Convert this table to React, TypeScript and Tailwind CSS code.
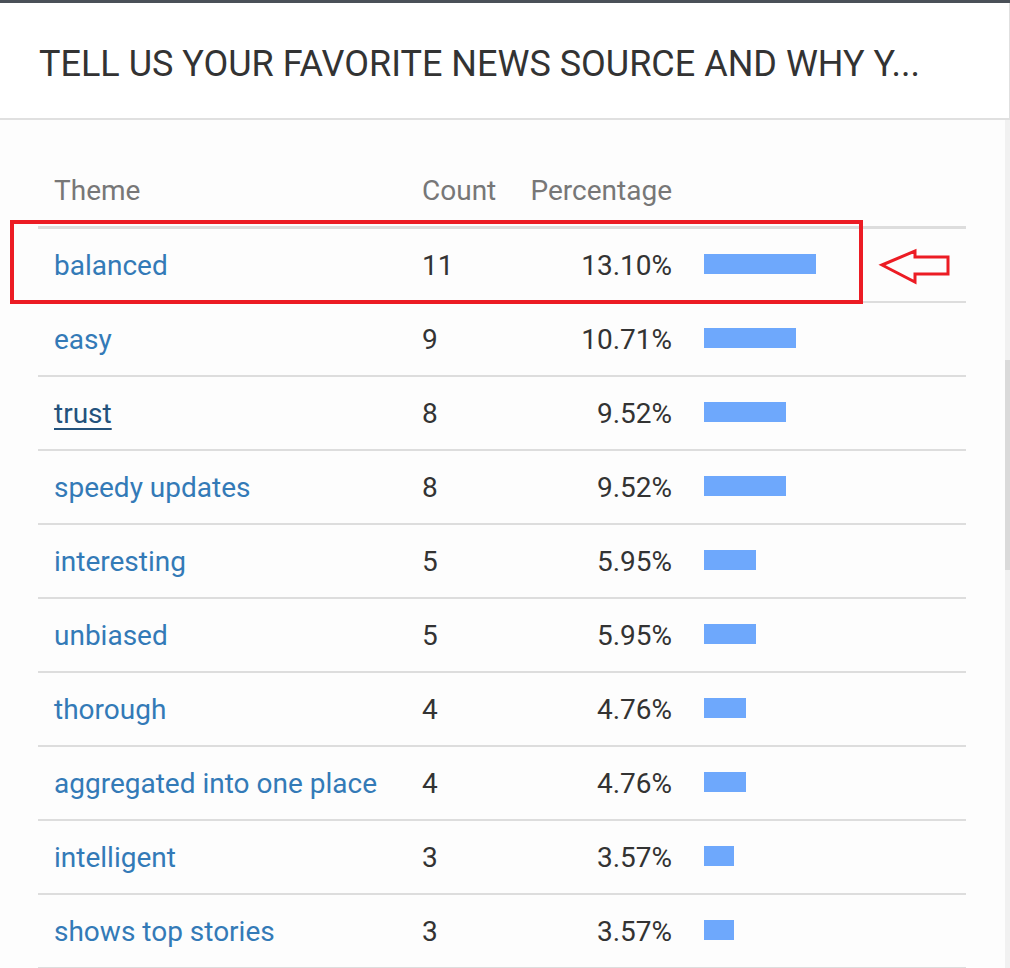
import React from "react";

const rows: { theme: string; count: number; pct: string; w: number; hover?: boolean }[] = [
  { theme: "balanced", count: 11, pct: "13.10%", w: 112 },
  { theme: "easy", count: 9, pct: "10.71%", w: 92 },
  { theme: "trust", count: 8, pct: "9.52%", w: 82, hover: true },
  { theme: "speedy updates", count: 8, pct: "9.52%", w: 82 },
  { theme: "interesting", count: 5, pct: "5.95%", w: 52 },
  { theme: "unbiased", count: 5, pct: "5.95%", w: 52 },
  { theme: "thorough", count: 4, pct: "4.76%", w: 42 },
  { theme: "aggregated into one place", count: 4, pct: "4.76%", w: 42 },
  { theme: "intelligent", count: 3, pct: "3.57%", w: 30 },
  { theme: "shows top stories", count: 3, pct: "3.57%", w: 30 },
];

export default function App() {
  return (
    <div
      className="relative w-[1010px] h-[968px] overflow-hidden bg-white"
      style={{ fontFamily: "Roboto, 'Liberation Sans', sans-serif" }}
    >
      <div className="h-[3px] bg-[#4a5058]" />
      <div className="flex h-[117px] items-center border-b-2 border-r border-[#e0e0e0] bg-white pl-[39px] pt-[6px]">
        <h1 className="text-[36px] leading-none text-[#333] whitespace-nowrap">
          TELL US YOUR FAVORITE NEWS SOURCE AND WHY Y...
        </h1>
      </div>
      <div className="relative flex h-[848px] bg-[#fdfdfd]">
        <div className="flex-1 pl-[38px] pr-[39px] pt-[36px]">
          <div className="flex h-[73px] items-center border-b-[3px] border-[#dddddd] text-[28px] text-[#777]">
            <div className="w-[368px] pl-4">Theme</div>
            <div className="w-[109px] pl-4">Count</div>
            <div className="w-[173px] pr-4 text-right">Percentage</div>
            <div className="flex-1" />
          </div>
          {rows.map((r) => (
            <div
              key={r.theme}
              className="flex h-[74px] items-center border-b-2 border-[#dddddd] pt-[2px] text-[28px] text-[#333]"
            >
              <div className="w-[368px] pl-4 whitespace-nowrap">
                {r.hover ? (
                  <span className="text-[#23527c] underline underline-offset-[5px]">{r.theme}</span>
                ) : (
                  <span className="text-[#337ab7]">{r.theme}</span>
                )}
              </div>
              <div className="w-[109px] pl-4">{r.count}</div>
              <div className="w-[173px] pr-4 text-right">{r.pct}</div>
              <div className="mb-[5px] flex-1 pl-4">
                <div className="h-[20px] bg-[#6ea8fc]" style={{ width: r.w }} />
              </div>
            </div>
          ))}
        </div>
        <div className="relative w-[5px] bg-[#f1f1f1]">
          <div className="absolute left-0 right-0 top-[240px] h-[210px] bg-[#dadada]" />
        </div>
      </div>
      {/* annotation overlay */}
      <div className="absolute left-[10px] top-[220px] h-[84px] w-[853px] border-4 border-[#ec1c24]" />
      <svg className="absolute left-[878px] top-[248px]" width="76" height="38" viewBox="0 0 76 38">
        <path
          d="M4 17 L37 3 L37 9 L70 9 L70 26 L37 26 L37 34 Z"
          fill="none"
          stroke="#ec1c24"
          strokeWidth="3"
          strokeLinejoin="miter"
        />
      </svg>
    </div>
  );
}
